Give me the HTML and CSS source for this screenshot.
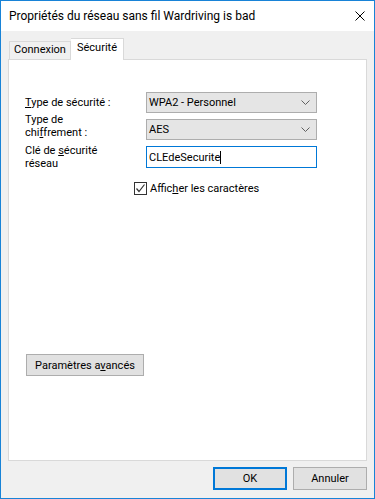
FILE: index.html
```html
<!DOCTYPE html>
<html lang="fr">
<head>
    <meta charset="UTF-8">
    <title>Propriétés du réseau sans fil</title>
    <link rel="stylesheet" href="styles.css">
</head>
<body>
    <div class="window">
        <div class="titlebar">
            <span class="title">Propriétés du réseau sans fil Wardriving is bad</span>
            <svg class="close" width="10" height="10" viewBox="0 0 10 10">
                <path d="M0.5 0.5 L9.5 9.5 M9.5 0.5 L0.5 9.5" stroke="#000" stroke-width="1" fill="none"/>
            </svg>
        </div>
        <div class="dialog">
            <div class="tabs">
                <div class="tab">Connexion</div>
                <div class="tab active">Sécurité</div>
            </div>
            <div class="panel">
                <div class="form">
                    <label class="label"><u>T</u>ype de sécurité :</label>
                    <div class="select">
                        <span>WPA2 - Personnel</span>
                        <svg width="9" height="5" viewBox="0 0 9 5"><path d="M0.5 0.5 L4.5 4.5 L8.5 0.5" stroke="#606060" fill="none"/></svg>
                    </div>
                    <label class="label raised">Type de<br>chi<u>f</u>frement :</label>
                    <div class="select">
                        <span>AES</span>
                        <svg width="9" height="5" viewBox="0 0 9 5"><path d="M0.5 0.5 L4.5 4.5 L8.5 0.5" stroke="#606060" fill="none"/></svg>
                    </div>
                    <label class="label">Clé de <u>s</u>écurité<br>réseau</label>
                    <div class="input">CLEdeSecurite<span class="caret"></span></div>
                    <div class="check-row">
                        <span class="checkbox">
                            <svg width="11" height="11" viewBox="0 0 11 11"><path d="M1.5 5.5 L4 8.5 L9.5 1.5" stroke="#333" stroke-width="1.2" fill="none"/></svg>
                        </span>
                        <span>Affic<u>h</u>er les caractères</span>
                    </div>
                </div>
                <button class="btn advanced">Paramètres a<u>v</u>ancés</button>
            </div>
            <div class="footer">
                <button class="btn default">OK</button>
                <button class="btn">Annuler</button>
            </div>
        </div>
    </div>
</body>
</html>
```

FILE: styles.css
```css
/* dialog window */
html, body {
    margin: 0;
    padding: 0;
    background: #fff;
}

body {
    font-family: Roboto, sans-serif;
    font-size: 11px;
    color: #000;
}

.window {
    width: 375px;
    height: 499px;
    box-sizing: border-box;
    border: 1px solid #1883d7;
    display: flex;
    flex-direction: column;
}

.titlebar {
    height: 30px;
    background: #fff;
    display: flex;
    align-items: center;
    justify-content: space-between;
    padding: 0 9px 0 8px;
}

.title {
    font-size: 12px;
}

.close {
    margin-top: -1px;
}

.dialog {
    flex: 1;
    background: #f0f0f0;
    display: flex;
    flex-direction: column;
    padding: 7px 7px 0 7px;
}

.tabs {
    display: flex;
    align-items: flex-end;
    padding-left: 1px;
    height: 21px;
    position: relative;
    z-index: 1;
}

.tab {
    box-sizing: border-box;
    width: 62px;
    height: 18px;
    line-height: 16px;
    text-align: center;
    border: 1px solid #d9d9d9;
    border-bottom: none;
    background: #f0f0f0;
}

.tab.active {
    width: 53px;
    height: 22px;
    margin-bottom: -1px;
    background: #fff;
    line-height: 18px;
    border-left: none;
}

.panel {
    height: 402px;
    box-sizing: border-box;
    background: #fff;
    border: 1px solid #d9d9d9;
    padding: 32px 16px 0 16px;
    display: flex;
    flex-direction: column;
    align-items: flex-start;
}

.form {
    display: grid;
    grid-template-columns: 121px 171px;
    grid-template-rows: 21px 21px 22px auto;
    row-gap: 6px;
    align-items: center;
}

.label {
    line-height: 13px;
}

.label.raised {
    margin-bottom: 8px;
}

.select {
    box-sizing: border-box;
    height: 21px;
    background: #e5e5e5;
    border: 1px solid #adadad;
    display: flex;
    align-items: center;
    justify-content: space-between;
    padding: 0 6px 0 2px;
}

.input {
    box-sizing: border-box;
    height: 22px;
    border: 1px solid #0078d7;
    display: flex;
    align-items: center;
    padding: 0 2px 0 2px;
}

.caret {
    display: inline-block;
    width: 1px;
    height: 13px;
    background: #000;
}

.check-row {
    grid-column: 2;
    height: 13px;
    margin-left: -12px;
    margin-top: 8px;
    display: flex;
    align-items: center;
    gap: 3px;
}

.checkbox {
    box-sizing: border-box;
    width: 13px;
    height: 13px;
    border: 1px solid #333;
    display: flex;
    align-items: center;
    justify-content: center;
    background: #fff;
}

.btn {
    font-family: Roboto, sans-serif;
    font-size: 11px;
    color: #000;
    background: #e1e1e1;
    border: 1px solid #adadad;
    height: 22px;
    padding: 0;
    box-sizing: border-box;
}

.advanced {
    margin-top: 159px;
    margin-left: 1px;
    width: 118px;
}

.footer {
    display: flex;
    justify-content: flex-end;
    gap: 6px;
    padding: 6px 0 0 0;
}

.footer .btn {
    width: 74px;
    height: 23px;
}

.btn.default {
    border: 2px solid #0078d7;
}
```
